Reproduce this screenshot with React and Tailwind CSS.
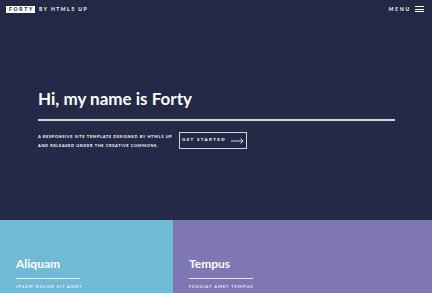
import React from "react";

const Tile = ({ title, sub, bg, className }) => (
  <div className={`${bg} ${className} flex flex-col justify-end pb-[4px] px-[16px]`}>
    <h3 className="text-[12px] font-bold text-white leading-none">{title}</h3>
    <div className="w-[64px] h-[1.5px] bg-white/80 mt-[8px]" />
    <p className="text-[4px] font-bold tracking-[0.25em] uppercase text-white/80 mt-[6px] leading-none whitespace-nowrap">{sub}</p>
  </div>
);

export default function App() {
  return (
    <div
      className="w-[432px] h-[293px] overflow-hidden bg-[#242943] text-white"
      style={{ fontFamily: "Lato, 'Open Sans', sans-serif" }}
    >
      <div className="h-[220px] flex flex-col bg-gradient-to-b from-[#232945] to-[#242a47]">
        <header className="h-[18px] flex items-center justify-between pl-[6px] pr-[8px]">
          <div className="flex items-center">
            <span className="bg-white text-[#242943] text-[5px] font-black tracking-[0.35em] pl-[3px] pr-[1px] py-[1px] leading-none">
              FORTY
            </span>
            <span className="text-[5px] font-bold tracking-[0.3em] ml-[4px] leading-none">BY HTML5 UP</span>
          </div>
          <div className="flex items-center gap-[4px]">
            <span className="text-[5px] font-bold tracking-[0.35em] leading-none">MENU</span>
            <div className="flex flex-col gap-[1.5px] w-[9px]">
              <div className="h-[1px] bg-white" />
              <div className="h-[1px] bg-white" />
              <div className="h-[1px] bg-white" />
            </div>
          </div>
        </header>
        <div className="flex flex-col px-[38px] pt-[72px]">
          <h1 className="text-[17px] font-bold leading-none">Hi, my name is Forty</h1>
          <div className="h-[1.5px] bg-white/80 w-[357px] mt-[12px]" />
          <div className="flex items-center gap-[6px] mt-[11px]">
            <p className="text-[4px] font-bold tracking-[0.15em] uppercase leading-[9px] w-[135px] whitespace-nowrap">
              A responsive site template designed by HTML5 UP
              <br />
              and released under the Creative Commons.
            </p>
            <button className="h-[17px] w-[68px] border border-white/80 flex items-center justify-center gap-[5px]">
              <span className="text-[4.5px] font-bold tracking-[0.3em] leading-none">GET STARTED</span>
              <svg width="13" height="6" viewBox="0 0 13 6" fill="none" stroke="white" strokeWidth="0.8">
                <path d="M0 3H12M9.5 0.5L12 3L9.5 5.5" />
              </svg>
            </button>
          </div>
        </div>
      </div>
      <div className="h-[73px] flex">
        <Tile title="Aliquam" sub="Ipsum dolor sit amet" bg="bg-[#71bad5]" className="w-[173px]" />
        <Tile title="Tempus" sub="Feugiat amet tempus" bg="bg-[#7f77b3]" className="flex-1" />
      </div>
    </div>
  );
}
